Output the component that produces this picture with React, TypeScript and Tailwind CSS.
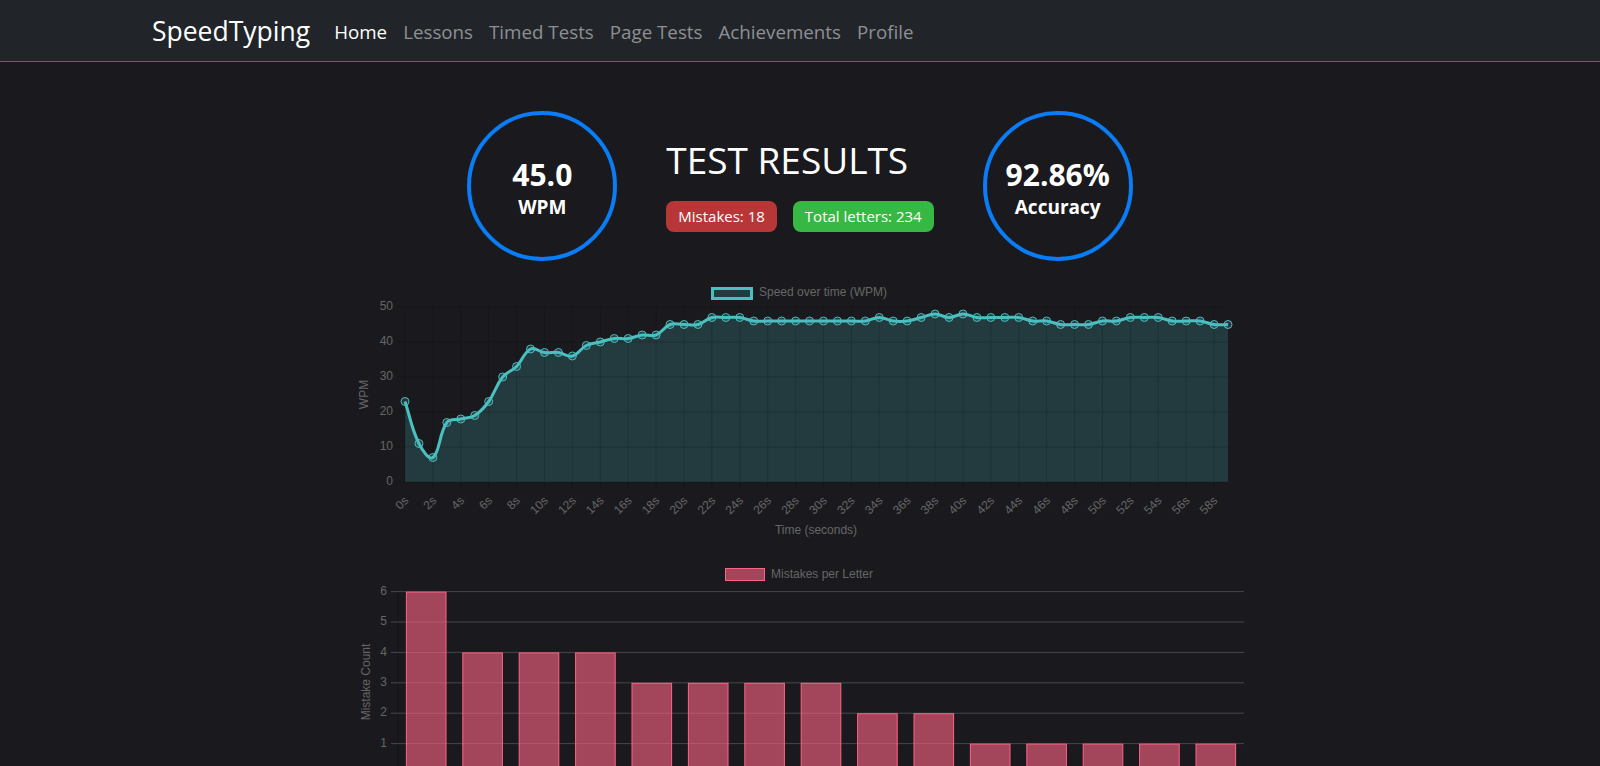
import React from "react";

const speed = [
	23, 11, 7, 17, 18, 19, 23, 30, 33, 38, 37, 37, 36, 39, 40, 41, 41, 42, 42, 45,
	45, 45, 47, 47, 47, 46, 46, 46, 46, 46, 46, 46, 46, 46, 47, 46, 46, 47, 48, 47,
	48, 47, 47, 47, 47, 46, 46, 45, 45, 45, 46, 46, 47, 47, 47, 46, 46, 46, 45, 45,
];

const mistakes = [6, 4, 4, 4, 3, 3, 3, 3, 2, 2, 1, 1, 1, 1, 1];

const navItems = ["Home", "Lessons", "Timed Tests", "Page Tests", "Achievements", "Profile"];

// line chart plot area (page coords, svg viewBox is offset to match)
const L = { left: 405, right: 1228, top: 307, bottom: 482, max: 50 };
const px = (i: number) => L.left + (i * (L.right - L.left)) / (speed.length - 1);
const py = (v: number) => L.bottom - (v / L.max) * (L.bottom - L.top);

function smoothPath(pts: { x: number; y: number }[], t = 0.4) {
	const cps = pts.map((p, i) => {
		const prev = pts[i - 1] ?? p;
		const next = pts[i + 1] ?? p;
		const d01 = Math.hypot(p.x - prev.x, p.y - prev.y);
		const d12 = Math.hypot(next.x - p.x, next.y - p.y);
		const s01 = d01 + d12 === 0 ? 0 : d01 / (d01 + d12);
		const s12 = d01 + d12 === 0 ? 0 : d12 / (d01 + d12);
		const fa = t * s01;
		const fb = t * s12;
		return {
			c1: { x: p.x - fa * (next.x - prev.x), y: p.y - fa * (next.y - prev.y) },
			c2: { x: p.x + fb * (next.x - prev.x), y: p.y + fb * (next.y - prev.y) },
		};
	});
	let d = `M${pts[0].x},${pts[0].y}`;
	for (let i = 1; i < pts.length; i++) {
		const a = cps[i - 1].c2;
		const b = cps[i].c1;
		d += ` C${a.x},${Math.min(a.y, L.bottom)} ${b.x},${Math.min(b.y, L.bottom)} ${pts[i].x},${pts[i].y}`;
	}
	return d;
}

function SpeedChart() {
	const pts = speed.map((v, i) => ({ x: px(i), y: py(v) }));
	const line = smoothPath(pts);
	const area = `${line} L${L.right},${L.bottom} L${L.left},${L.bottom} Z`;
	const grid = "rgba(0,0,0,0.15)";
	return (
		<svg width={900} height={280} viewBox="350 275 900 280" className="block" style={{ fontFamily: '"Liberation Sans", Arial, sans-serif' }}>
			{/* legend */}
			<rect x={712.5} y={288.5} width={39} height={10} fill="rgba(75,192,192,0.2)" stroke="rgb(75,192,192)" strokeWidth={3} />
			<text x={759} y={293} fontSize={12} fill="#666" dominantBaseline="middle">Speed over time (WPM)</text>

			<path d={area} fill="rgba(75,192,192,0.2)" />

			{[0, 10, 20, 30, 40, 50].map((v) => (
				<g key={v}>
					<line x1={L.left - 8} x2={L.right} y1={py(v)} y2={py(v)} stroke={grid} />
					<text x={393} y={py(v)} fontSize={12} fill="#666" textAnchor="end" dominantBaseline="middle">{v}</text>
				</g>
			))}
			{speed.map((_, i) =>
				i % 2 === 0 ? (
					<g key={i}>
						<line x1={px(i)} x2={px(i)} y1={L.top} y2={L.bottom + 8} stroke={grid} />
						<text transform={`translate(${px(i) + 2},${499}) rotate(-45)`} fontSize={12} fill="#666" textAnchor="end" dominantBaseline="middle">
							{i}s
						</text>
					</g>
				) : null,
			)}

			<path d={line} fill="none" stroke="rgb(75,192,192)" strokeWidth={3} />
			{pts.map((p, i) => (
				<circle key={i} cx={p.x} cy={p.y} r={4} fill="rgba(75,192,192,0.2)" stroke="rgb(75,192,192)" strokeWidth={1} />
			))}

			<text x={816} y={531} fontSize={12} fill="#666" textAnchor="middle" dominantBaseline="middle">Time (seconds)</text>
			<text transform="translate(365,394.5) rotate(-90)" fontSize={12} fill="#666" textAnchor="middle" dominantBaseline="middle">WPM</text>
		</svg>
	);
}

function MistakeChart() {
	const left = 398;
	const right = 1244;
	const zero = 774;
	const unit = 30.4;
	const cat = (right - left) / mistakes.length;
	const bw = cat * 0.72;
	return (
		<svg width={900} height={212} viewBox="350 555 900 212" className="block" style={{ fontFamily: '"Liberation Sans", Arial, sans-serif' }}>
			<rect x={725.5} y={568.5} width={39} height={12} fill="rgba(255,99,132,0.6)" stroke="rgb(255,99,132)" strokeWidth={1} />
			<text x={771} y={574.5} fontSize={12} fill="#666" dominantBaseline="middle">Mistakes per Letter</text>

			<line x1={left} x2={left} y1={591} y2={zero} stroke="rgba(0,0,0,0.25)" />
			{[0, 1, 2, 3, 4, 5, 6].map((v) => (
				<g key={v}>
					<line x1={left - 7} x2={right} y1={zero - v * unit} y2={zero - v * unit} stroke="#46464a" />
					{v > 0 && (
						<text x={387} y={zero - v * unit} fontSize={12} fill="#666" textAnchor="end" dominantBaseline="middle">{v}</text>
					)}
				</g>
			))}

			{mistakes.map((v, i) => {
				const x = left + i * cat + (cat - bw) / 2;
				return (
					<rect key={i} x={x + 0.5} y={zero - v * unit + 0.5} width={bw - 1} height={v * unit} fill="rgba(255,99,132,0.6)" stroke="rgb(255,99,132)" strokeWidth={1} />
				);
			})}

			<text transform="translate(367,682) rotate(-90)" fontSize={12} fill="#666" textAnchor="middle" dominantBaseline="middle">Mistake Count</text>
		</svg>
	);
}

function StatCircle({ value, label }: { value: string; label: string }) {
	return (
		<div className="w-[150px] h-[150px] shrink-0 rounded-full border-4 border-[#0a7cf5] flex flex-col items-center justify-center text-white font-bold">
			<div className="text-[30px] leading-[38px] mt-[4px]">{value}</div>
			<div className="text-[19px] leading-[26px]">{label}</div>
		</div>
	);
}

export default function App() {
	return (
		<div className="h-screen bg-[#1a1a1e] text-white overflow-hidden" style={{ fontFamily: '"Open Sans", "Noto Sans", sans-serif' }}>
			<nav className="h-[62px] bg-[#212529] border-b border-[#0d6efd]">
				<div className="max-w-[1320px] mx-auto px-3 h-full flex items-center pt-[3px]">
					<span className="text-[26.5px] text-white mr-4">SpeedTyping</span>
					<ul className="flex items-center">
						{navItems.map((item, i) => (
							<li key={item} className={`px-2 text-[18.75px] ${i === 0 ? "text-white" : "text-[#8e9093]"}`}>
								{item}
							</li>
						))}
					</ul>
				</div>
			</nav>

			<main className="flex flex-col items-center">
				<div className="mt-[49px] flex items-center justify-center gap-[49px]">
					<StatCircle value="45.0" label="WPM" />
					<div className="flex flex-col">
						<h1 className="text-[37px] leading-[44px] font-normal mt-[-2px] whitespace-nowrap">TEST RESULTS</h1>
						<div className="flex gap-4 mt-[19px]">
							<span className="bg-[#b93638] rounded-lg px-3 h-[31px] flex items-center text-[15px] whitespace-nowrap">Mistakes: 18</span>
							<span className="bg-[#37b844] rounded-lg px-3 h-[31px] flex items-center text-[15px] whitespace-nowrap">Total letters: 234</span>
						</div>
					</div>
					<StatCircle value="92.86%" label="Accuracy" />
				</div>

				<div className="mt-[14px]">
					<SpeedChart />
				</div>
				<MistakeChart />
			</main>
		</div>
	);
}
